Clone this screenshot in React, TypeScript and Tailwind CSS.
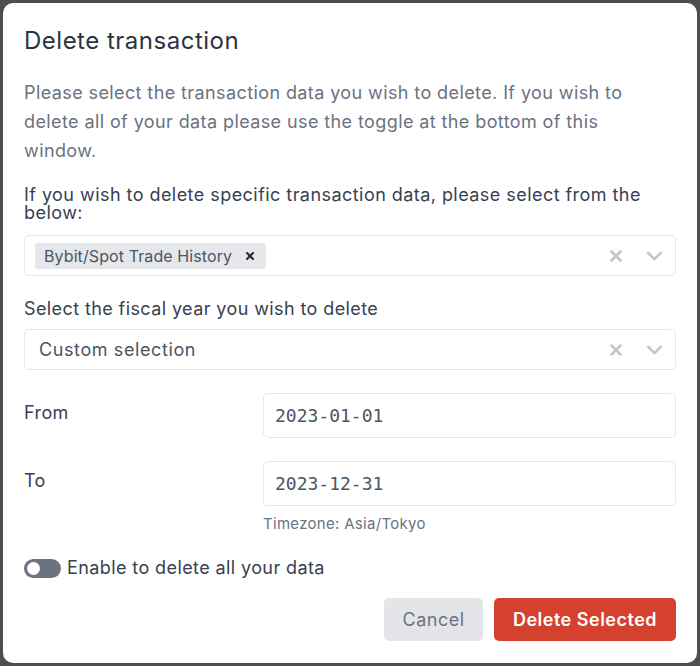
import React from "react";

const font = { fontFamily: "Inter, 'Noto Sans', sans-serif" };
const mono = { fontFamily: "'DejaVu Sans Mono', monospace" };

function XIcon({ className, sw = 2.6 }: { className?: string; sw?: number }) {
  return (
    <svg viewBox="0 0 20 20" className={className} fill="none" stroke="currentColor" strokeWidth={sw} strokeLinecap="round">
      <path d="M5 5l10 10M15 5L5 15" />
    </svg>
  );
}

function Chevron({ className }: { className?: string }) {
  return (
    <svg viewBox="0 0 20 20" className={className} fill="none" stroke="currentColor" strokeWidth={2.4} strokeLinecap="round" strokeLinejoin="round">
      <path d="M4 7.5l6 6 6-6" />
    </svg>
  );
}

function Indicators() {
  return (
    <div className="flex items-center gap-[19px] pr-[10px] text-[#c4c4c4]">
      <XIcon className="w-[18px] h-[18px]" sw={2.8} />
      <Chevron className="w-[21px] h-[21px]" />
    </div>
  );
}

export default function App() {
  return (
    <div className="w-[700px] h-[666px] bg-[#4e4e4e] p-[3px]" style={font}>
      <div className="bg-white rounded-[10px] h-full px-[21px] pt-[22px] flex flex-col">
        <h1 className="text-[24px] leading-[32px] tracking-[0.5px] text-[#2a3441] font-normal">Delete transaction</h1>
        <p className="mt-[21px] text-[18px] leading-[29px] tracking-[0.4px] text-[#6b7280]">
          Please select the transaction data you wish to delete. If you wish to delete all of your data please use the toggle at the bottom of this window.
        </p>
        <div className="mt-[21px] text-[18px] leading-[18px] tracking-[0.45px] text-[#374151]">
          If you wish to delete specific transaction data, please select from the below:
        </div>
        <div className="mt-[13px] h-[41px] border border-[#e5e7eb] rounded-[5px] flex items-center justify-between pl-[10px]">
          <div className="h-[26px] bg-[#e5e7eb] rounded-[3px] flex items-center pl-[9px] pr-[10px] gap-[12px]">
            <span className="text-[16px] tracking-[0.1px] text-[#4b5563]">Bybit/Spot Trade History</span>
            <XIcon className="w-[12px] h-[12px] text-[#1f2937]" sw={3.4} />
          </div>
          <Indicators />
        </div>
        <div className="mt-[19px] text-[18px] leading-[28px] tracking-[0.4px] text-[#374151]">Select the fiscal year you wish to delete</div>
        <div className="mt-[6px] h-[41px] border border-[#e5e7eb] rounded-[5px] flex items-center justify-between pl-[14px]">
          <span className="text-[18px] tracking-[0.6px] text-[#4b5563]">Custom selection</span>
          <Indicators />
        </div>
        <div className="mt-[23px] flex">
          <div className="w-[239px] text-[18px] leading-[40px] tracking-[0.4px] text-[#374151]">From</div>
          <div className="flex-1 h-[45px] border border-[#e5e7eb] rounded-[5px] flex items-center pl-[11px] text-[18px] text-[#4b5563]" style={mono}>
            2023-01-01
          </div>
        </div>
        <div className="mt-[23px] flex">
          <div className="w-[239px] text-[18px] leading-[40px] tracking-[0.4px] text-[#374151]">To</div>
          <div className="flex-1">
            <div className="h-[45px] border border-[#e5e7eb] rounded-[5px] flex items-center pl-[11px] text-[18px] text-[#4b5563]" style={mono}>
              2023-12-31
            </div>
            <div className="mt-[8px] text-[15px] leading-[20px] tracking-[0.3px] text-[#6b7280]">Timezone: Asia/Tokyo</div>
          </div>
        </div>
        <div className="mt-[22px] flex items-center gap-[6px]">
          <div className="w-[37px] h-[19px] rounded-full bg-[#6b7280] flex items-center px-[3px]">
            <div className="w-[13px] h-[13px] rounded-full bg-white" />
          </div>
          <span className="text-[18px] leading-[24px] tracking-[0.4px] text-[#374151]">Enable to delete all your data</span>
        </div>
        <div className="mt-[18px] flex justify-end gap-[11px]">
          <button className="w-[99px] h-[43px] rounded-[5px] bg-[#e3e5e8] text-[18px] tracking-[0.5px] text-[#6b7280]">Cancel</button>
          <button className="w-[182px] h-[43px] rounded-[5px] bg-[#d5412f] text-[18px] tracking-[0.5px] font-semibold text-white">Delete Selected</button>
        </div>
      </div>
    </div>
  );
}
